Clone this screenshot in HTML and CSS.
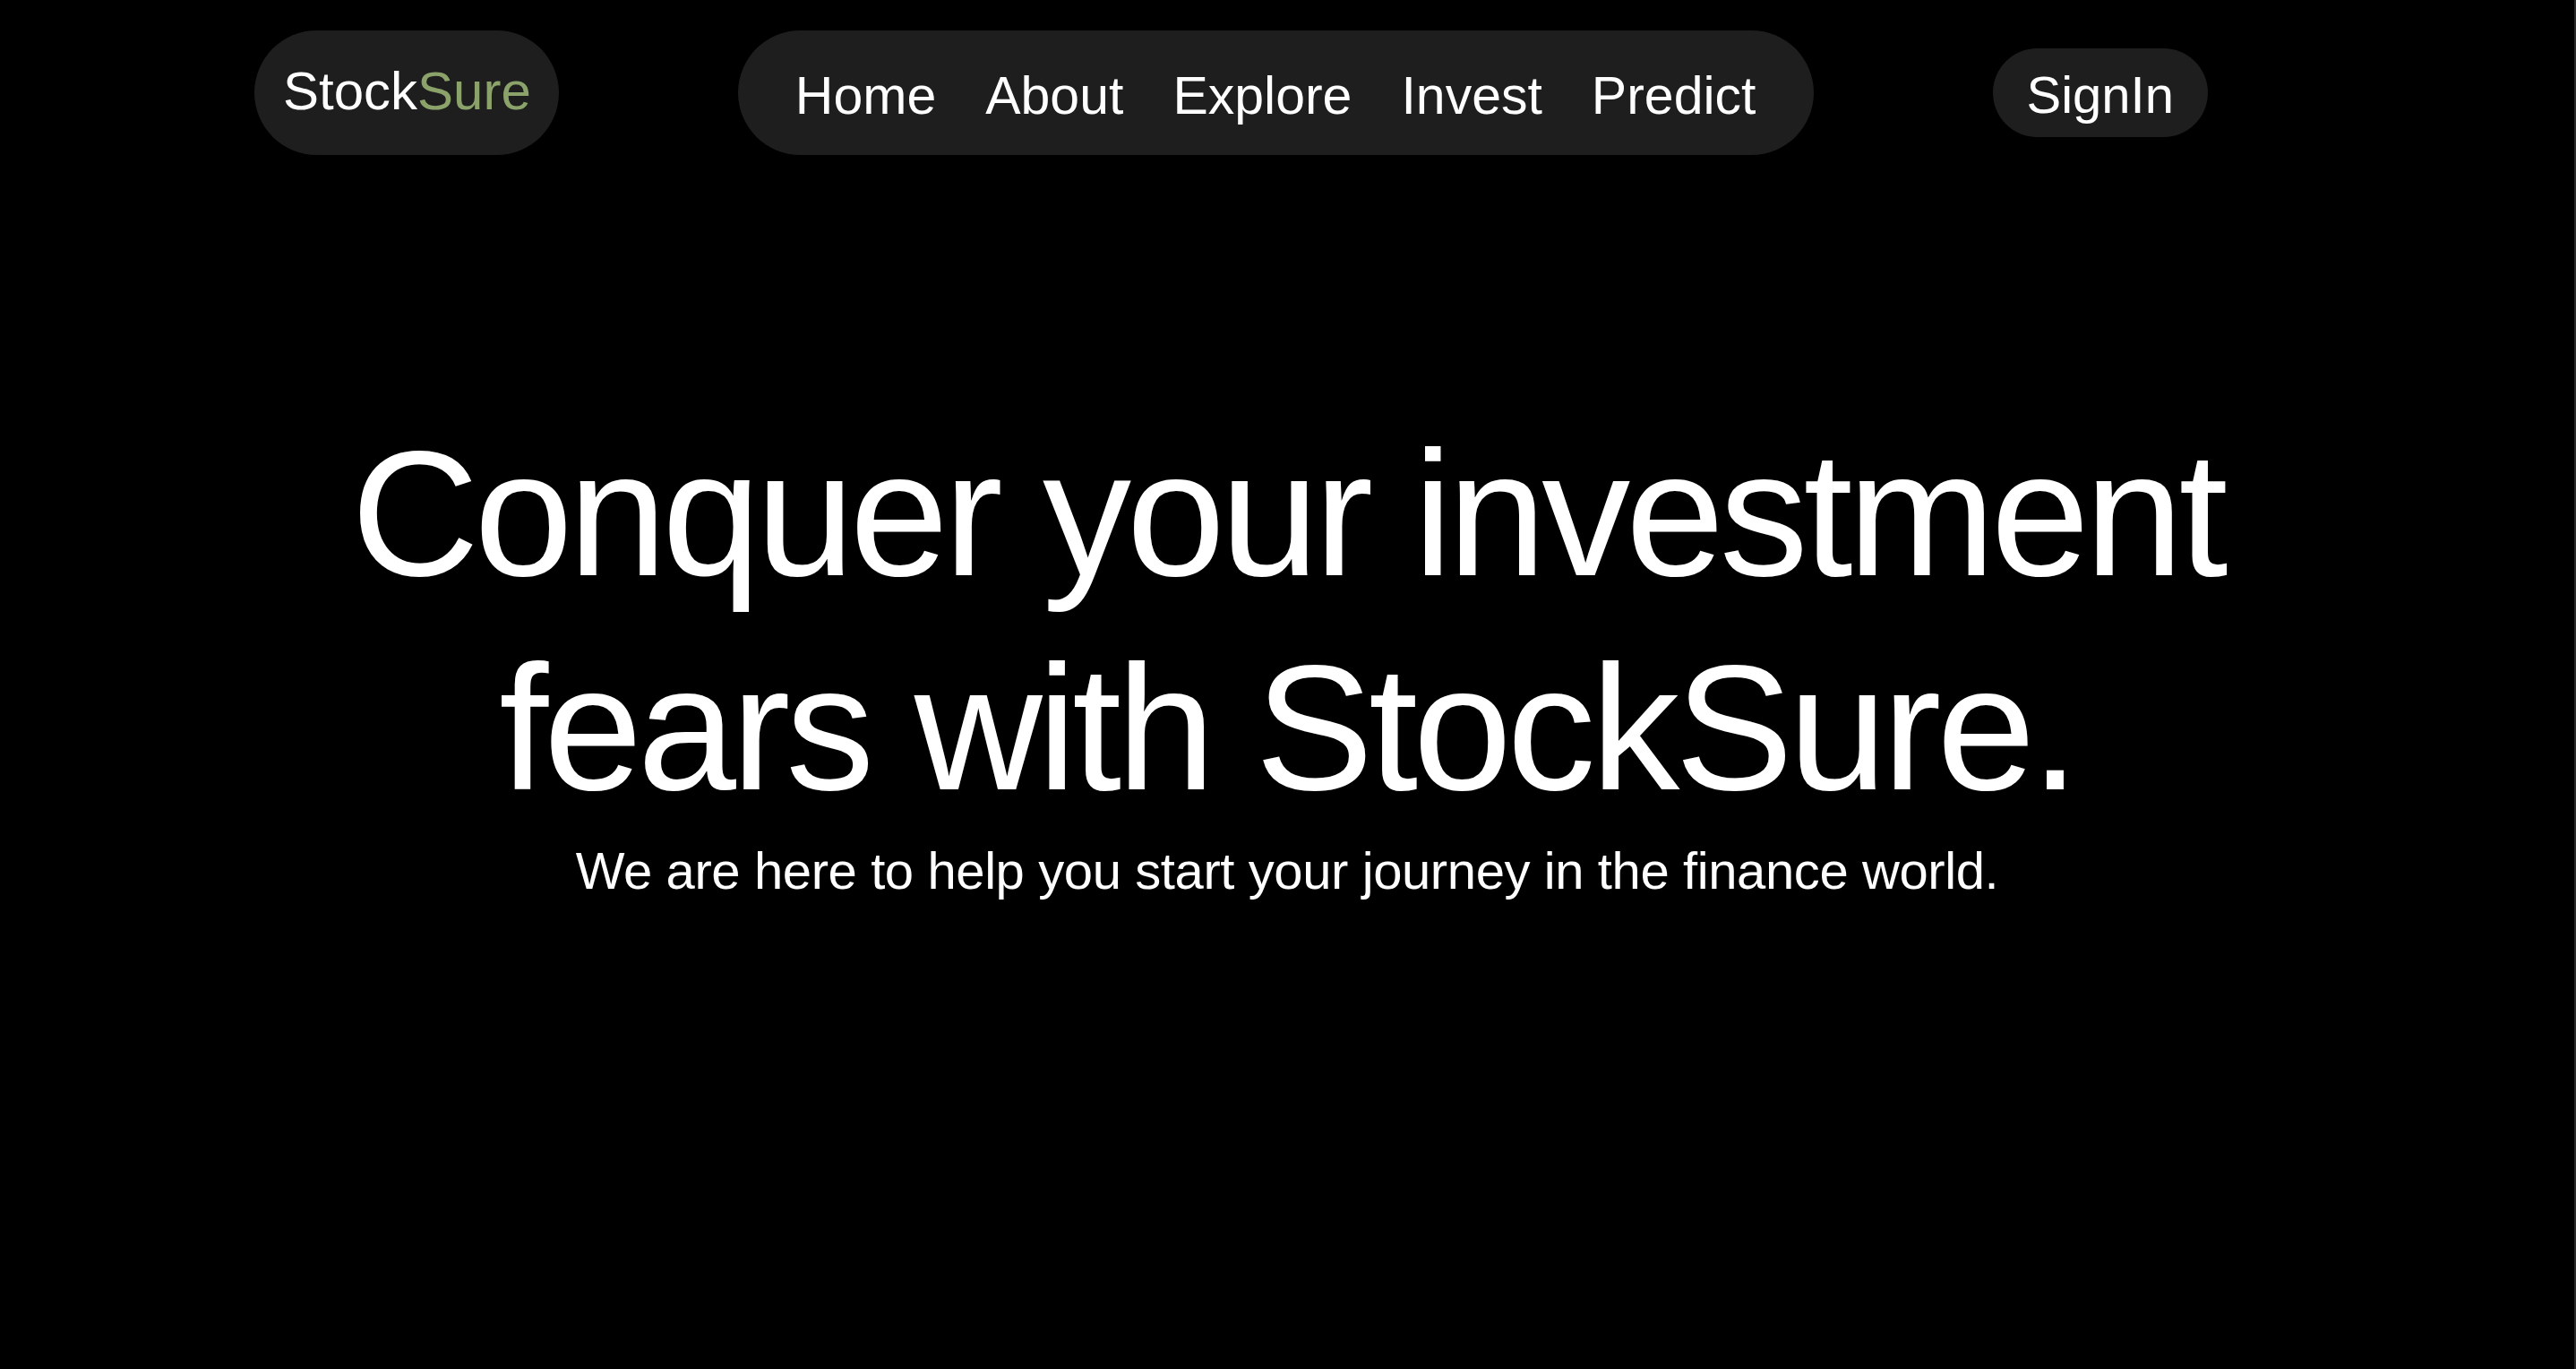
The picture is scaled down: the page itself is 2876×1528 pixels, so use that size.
FILE: index.html
```html
<!DOCTYPE html>
<html lang="en">
<head>
<meta charset="utf-8">
<title>StockSure</title>
<link rel="stylesheet" href="styles.css">
</head>
<body>
<header class="topbar">
  <a class="logo" href="#">Stock<span class="logo-accent">Sure</span></a>
  <nav class="nav">
    <a class="nav-link" href="#">Home</a>
    <a class="nav-link" href="#">About</a>
    <a class="nav-link" href="#">Explore</a>
    <a class="nav-link" href="#">Invest</a>
    <a class="nav-link" href="#">Predict</a>
  </nav>
  <a class="signin" href="#">SignIn</a>
</header>
<main class="hero">
  <h1 class="hero-title">Conquer your investment<br>fears with StockSure.</h1>
  <p class="hero-sub">We are here to help you start your journey in the finance world.</p>
</main>
</body>
</html>
```
FILE: styles.css
```css
html, body {
  margin: 0;
  padding: 0;
  background: #000;
  color: #fff;
  font-family: "Liberation Sans", Arial, Helvetica, sans-serif;
}
body {
  min-height: 1528px;
  border-right: 2px solid #2a2a2a;
  box-sizing: border-box;
}
a {
  color: inherit;
  text-decoration: none;
}
.topbar {
  display: flex;
  align-items: center;
  gap: 200px;
  padding: 34px 0 0 284px;
}
.logo {
  display: block;
  background: #1e1e1e;
  border-radius: 70px;
  height: 139px;
  box-sizing: border-box;
  padding: 34px 31px 0 32px;
  font-size: 60px;
  line-height: 67px;
  color: #fff;
  white-space: nowrap;
}
.logo-accent {
  color: #8ba36a;
}
.nav {
  display: flex;
  gap: 55px;
  background: #1e1e1e;
  border-radius: 70px;
  height: 139px;
  box-sizing: border-box;
  padding: 39px 64px 0 64px;
}
.nav-link {
  font-size: 59px;
  line-height: 68px;
  white-space: nowrap;
}
.signin {
  display: block;
  background: #1e1e1e;
  border-radius: 50px;
  height: 99px;
  box-sizing: border-box;
  padding: 19px 38px 0 38px;
  font-size: 58px;
  line-height: 66px;
  white-space: nowrap;
}
.hero {
  display: flex;
  flex-direction: column;
  align-items: center;
  text-align: center;
  padding-top: 281px;
}
.hero-title {
  margin: 0;
  font-weight: 400;
  font-size: 198px;
  line-height: 239px;
  letter-spacing: -5.3px;
}
.hero-sub {
  margin: 7px 0 0 0;
  font-size: 58px;
  line-height: 66px;
  letter-spacing: -0.4px;
}
```
